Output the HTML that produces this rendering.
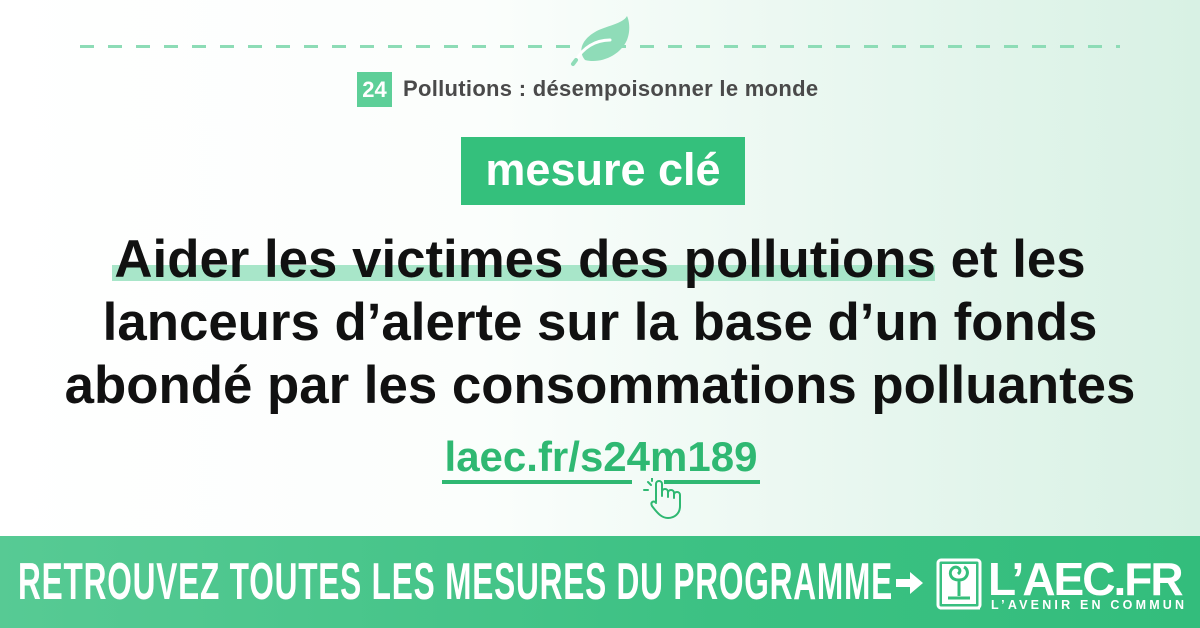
<!DOCTYPE html>
<html><head><meta charset="utf-8"><style>
*{margin:0;padding:0;box-sizing:border-box}
body{width:1200px;height:628px;overflow:hidden;position:relative;font-family:"Liberation Sans",sans-serif;background:linear-gradient(90deg,#ffffff 0%,#fbfefc 40%,#e6f6ee 75%,#d8f1e4 100%)}
.dash{position:absolute;top:45px;left:80px;width:1040px;height:3px;background:repeating-linear-gradient(90deg,#8ddcb6 0 14px,transparent 14px 28px)}
.badge{position:absolute;left:357px;top:72px;width:35px;height:35px;background:#5dcf98;color:#fff;font-weight:bold;font-size:22px;text-align:center;line-height:35px}
.cat{position:absolute;left:403px;top:76px;font-size:22px;font-weight:bold;color:#4a4a4a;letter-spacing:0.3px}
.mesure{position:absolute;left:461px;top:137px;width:284px;height:68px;background:#34c07c;color:#fff;font-weight:bold;font-size:45px;text-align:center;line-height:66px}
.hl{position:absolute;left:112px;top:265px;width:823px;height:16px;background:#a8e6c9}
.head{position:absolute;left:0;top:228px;width:1200px;text-align:center;font-weight:bold;font-size:52.8px;line-height:63px;color:#111}
.link{position:absolute;left:432px;top:433px;width:338px;text-align:center;font-weight:bold;font-size:42px;color:#2fb872}
.ul{position:absolute;top:480px;height:4px;background:#2fb872}
.banner{position:absolute;left:0;top:536px;width:1200px;height:92px;background:linear-gradient(90deg,#57ca94,#3cc183 60%,#33bd7c)}
.bt{position:absolute;left:18px;top:552px;font-weight:bold;font-size:52px;color:#fff;transform:scaleX(0.608);transform-origin:left;white-space:nowrap;letter-spacing:1.3px}
.logo{position:absolute;left:988px;top:556px;font-weight:900;font-size:46px;color:#fff;letter-spacing:-2px;line-height:46px}
.sub{position:absolute;left:991px;top:598px;font-weight:bold;font-size:12.5px;color:#fff;letter-spacing:3.2px}
</style></head><body>
<div class="dash"></div>
<svg style="position:absolute;left:565px;top:12px" width="70" height="60" viewBox="0 0 70 60"><path d="M62 4 C58 12 40 14 30 20 C18 27 12 38 20 48 C35 52 55 44 62 28 C66 18 64 8 62 4Z" fill="#8fdcb8"/><path d="M45 28 C30 28 18 36 11 48" stroke="#fff" stroke-width="3" fill="none" stroke-linecap="round"/><path d="M11 48 L8 52" stroke="#8fdcb8" stroke-width="4" stroke-linecap="round"/></svg>
<div class="badge">24</div>
<div class="cat">Pollutions : désempoisonner le monde</div>
<div class="mesure">mesure clé</div>
<div class="hl"></div>
<div class="head">Aider les victimes des pollutions et les<br>lanceurs d’alerte sur la base d’un fonds<br>abondé par les consommations polluantes</div>
<div class="link">laec.fr/s24m189</div>
<div class="ul" style="left:442px;width:190px"></div>
<div class="ul" style="left:664px;width:96px"></div>
<svg style="position:absolute;left:640px;top:478px" width="50" height="42" viewBox="0 0 50 42"><g stroke="#2fb872" stroke-width="2" fill="none" stroke-linecap="round"><path d="M16 24 V6 a3 3 0 0 1 6 0 V18 M22 14 a3 3 0 0 1 6 0 V19 M28 15 a3 3 0 0 1 6 0 V20 M34 17 a3 3 0 0 1 6 0 V28 C40 36 34 40 28 40 C22 40 18 36 12 28 C10 24 14 22 16 25"/><path d="M8 4 L11 7 M4 12 H8 M12 0 V3"/></g></svg>
<div class="banner"></div>
<div class="bt">RETROUVEZ TOUTES LES MESURES DU PROGRAMME</div>
<svg style="position:absolute;left:896px;top:571px" width="28" height="24" viewBox="0 0 28 24"><path d="M0 8 H14 V1 L27 12 L14 23 V16 H0Z" fill="#fff"/></svg>
<svg style="position:absolute;left:936px;top:558px" width="48" height="56" viewBox="0 0 48 56"><rect x="2" y="2" width="42" height="48" rx="3" fill="none" stroke="#fff" stroke-width="3"/><rect x="6" y="6" width="34" height="40" fill="#fff"/><path d="M4 50 H44" stroke="#fff" stroke-width="3"/><path d="M12 40 H34" stroke="#34be7a" stroke-width="3"/><path d="M23 38 V22 M23 22 C14 22 12 14 17 10 C21 7 27 12 22 16 M23 22 C32 22 34 12 28 9" stroke="#34be7a" stroke-width="3" fill="none"/></svg>
<div class="logo">L’AEC.FR</div>
<div class="sub">L’AVENIR EN COMMUN</div>
</body></html>
